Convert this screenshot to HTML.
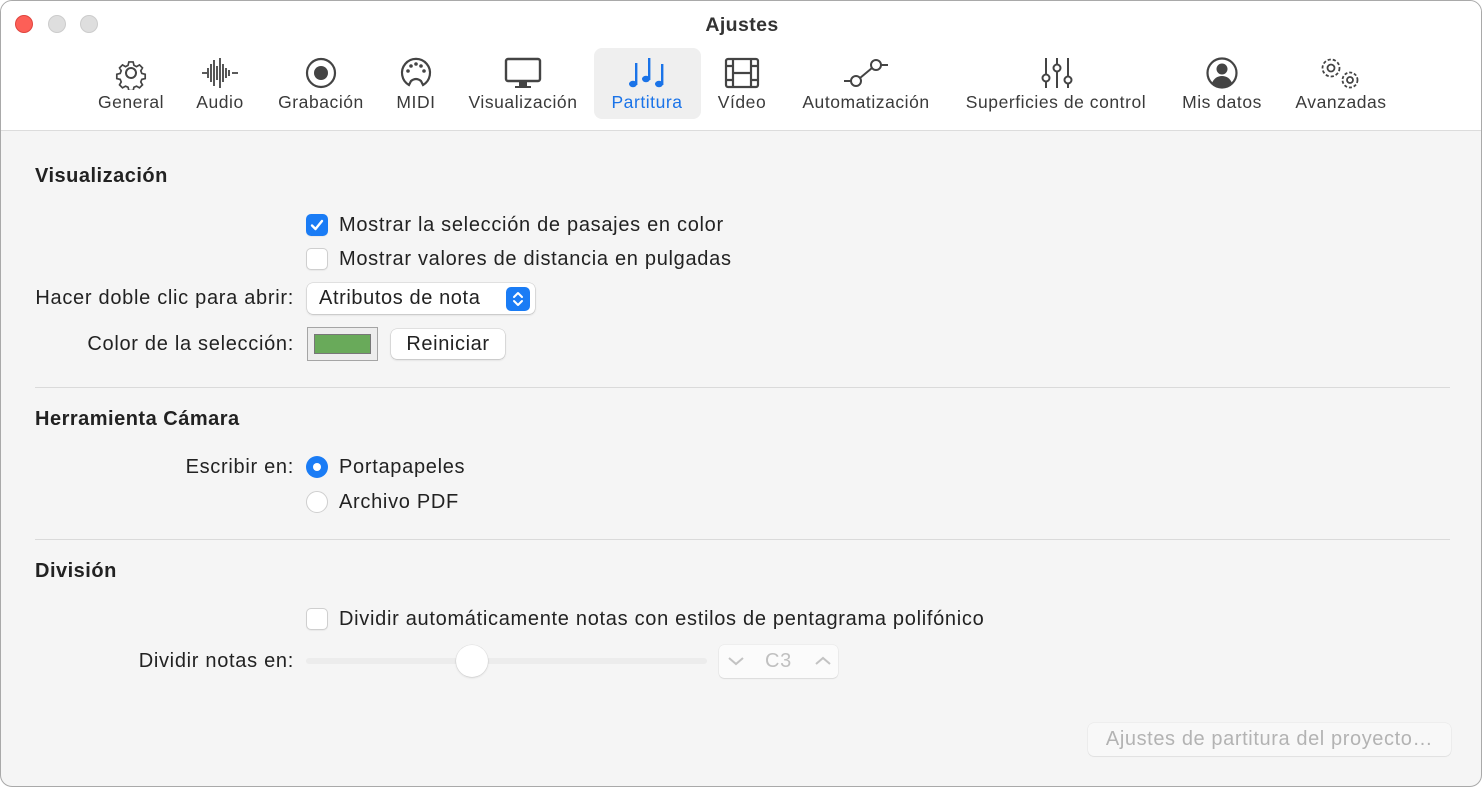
<!DOCTYPE html>
<html><head><meta charset="utf-8"><style>
*{margin:0;padding:0;box-sizing:border-box}
body{width:1482px;height:787px;background:#fff;font-family:"Liberation Sans",sans-serif;position:relative;overflow:hidden;color:#222}
.win{position:absolute;left:0;top:0;width:1482px;height:787px;border:1px solid #a9a9a9;border-radius:12px;background:#f5f5f5;overflow:hidden}
.hdr{position:absolute;left:0;top:0;width:100%;height:130px;background:#fff;border-bottom:1px solid #dcdcdc}
.a{position:absolute;white-space:nowrap}
.tb{position:absolute;width:240px;text-align:center;top:90px;font-size:17.5px;letter-spacing:.55px;color:#3a3a3a;line-height:22px}
.ic{position:absolute;top:55px}
.t{position:absolute;white-space:nowrap;font-size:20px;letter-spacing:.7px;line-height:24px;color:#222}
.h{font-weight:bold;letter-spacing:.5px}
.r{text-align:right}
.cb{position:absolute;width:22px;height:22px;border-radius:5px;background:#fff;border:1px solid #cfcfcf;box-shadow:0 1px 1px rgba(0,0,0,.05)}
.sep{position:absolute;left:34px;width:1415px;height:1px;background:#dadada}
.btn{position:absolute;background:#fff;border-radius:6px;box-shadow:0 0 0 .5px rgba(0,0,0,.15),0 1px 2px rgba(0,0,0,.15);font-size:20px;letter-spacing:.6px;line-height:30px;text-align:center}
</style></head><body>
<div class="win">
<div class="hdr"></div>
<div class="a" style="left:14px;top:14px;width:18px;height:18px;border-radius:50%;background:#fd5f57;border:.5px solid #e0443e"></div>
<div class="a" style="left:47px;top:14px;width:18px;height:18px;border-radius:50%;background:#dedede;border:.5px solid #ccc"></div>
<div class="a" style="left:79px;top:14px;width:18px;height:18px;border-radius:50%;background:#dedede;border:.5px solid #ccc"></div>
<div class="a" style="left:0;width:1482px;text-align:center;top:12px;font-size:19.5px;letter-spacing:.4px;font-weight:bold;color:#333;line-height:24px">Ajustes</div>
<div class="a" style="left:593px;top:47px;width:107px;height:71px;background:#efefef;border-radius:8px"></div>

<svg class="ic" style="left:113px" width="34" height="34" viewBox="0 0 34 34" fill="none" stroke="#444" stroke-width="2"><circle cx="17" cy="17" r="5"/><path d="M14.5 4h5l1 4 3 1.5 3.5-2 3.5 3.5-2 3.5 1.2 3 4 1v5l-4 1-1.2 3 2 3.5-3.5 3.5-3.5-2-3 1.2-1 4h-5l-1-4-3-1.2-3.5 2-3.5-3.5 2-3.5-1.2-3-4-1v-5l4-1 1.2-3-2-3.5 3.5-3.5 3.5 2 3-1.5z" transform="translate(17 17) scale(.85) translate(-17 -17)"/></svg>
<svg class="ic" style="left:200px" width="38" height="34" viewBox="0 0 38 34" fill="none" stroke="#444" stroke-width="1.8"><path d="M1 17h5M7 12v10M10 8v18M13 4v26M16 10v14M19 2v30M22 8v18M25 12v10M28 14v6M31 17h6"/></svg>
<svg class="ic" style="left:303px" width="34" height="34" viewBox="0 0 34 34"><circle cx="17" cy="17" r="14" fill="none" stroke="#444" stroke-width="2.2"/><circle cx="17" cy="17" r="7" fill="#444"/></svg>
<svg class="ic" style="left:398px" width="34" height="34" viewBox="0 0 34 34" fill="none" stroke="#444" stroke-width="2.2"><path d="M10 29A14 14 0 1 1 24 29L22 25Q17 21 12 25Z"/><g fill="#444" stroke="none"><circle cx="9" cy="15" r="1.8"/><circle cx="12" cy="10" r="1.8"/><circle cx="17" cy="8" r="1.8"/><circle cx="22" cy="10" r="1.8"/><circle cx="25" cy="15" r="1.8"/></g></svg>
<svg class="ic" style="left:503px" width="38" height="34" viewBox="0 0 38 34"><rect x="2" y="3" width="34" height="22" rx="2" fill="none" stroke="#444" stroke-width="2.4"/><rect x="15" y="26" width="8" height="4" fill="#444"/><rect x="11" y="30" width="16" height="2" fill="#444"/></svg>
<svg class="ic" style="left:627px" width="40" height="34" viewBox="0 0 40 34" fill="#1a73e8"><rect x="7" y="7" width="2.4" height="22"/><ellipse cx="5" cy="28" rx="4" ry="3.2"/><rect x="20" y="2" width="2.4" height="22"/><ellipse cx="18" cy="23" rx="4" ry="3.2"/><rect x="33" y="8" width="2.4" height="21"/><ellipse cx="31" cy="28" rx="4" ry="3.2"/></svg>
<svg class="ic" style="left:723px" width="36" height="34" viewBox="0 0 36 34" fill="none" stroke="#444" stroke-width="2.2"><rect x="2" y="3" width="32" height="28" rx="2"/><path d="M9 3v28M27 3v28M9 17h18M2 10h7M2 24h7M27 10h7M27 24h7"/></svg>
<svg class="ic" style="left:841px" width="48" height="34" viewBox="0 0 48 34" fill="none" stroke="#444" stroke-width="2"><circle cx="34" cy="9" r="5"/><circle cx="14" cy="25" r="5"/><path d="M39 9h7M2 25h7M30 12L18 22"/></svg>
<svg class="ic" style="left:1039px" width="34" height="34" viewBox="0 0 34 34" fill="none" stroke="#444" stroke-width="2"><path d="M6 2v16M6 26v6M17 2v6M17 16v16M28 2v18M28 28v4"/><circle cx="6" cy="22" r="3.5"/><circle cx="17" cy="12" r="3.5"/><circle cx="28" cy="24" r="3.5"/></svg>
<svg class="ic" style="left:1204px" width="34" height="34" viewBox="0 0 34 34"><circle cx="17" cy="17" r="14.5" fill="none" stroke="#444" stroke-width="2.2"/><circle cx="17" cy="13" r="5.5" fill="#444"/><path d="M7 27Q10 20 17 20Q24 20 27 27Q22 31 17 31Q12 31 7 27Z" fill="#444"/></svg>
<svg class="ic" style="left:1318px" width="46" height="36" viewBox="0 0 46 36" fill="none" stroke="#444" stroke-width="1.8"><circle cx="12" cy="12" r="3.5"/><circle cx="12" cy="12" r="8.5" stroke-dasharray="3.2 2"/><circle cx="31" cy="24" r="3"/><circle cx="31" cy="24" r="7.5" stroke-dasharray="3 1.9"/></svg>

<div class="tb" style="left:10px">General</div>
<div class="tb" style="left:99px">Audio</div>
<div class="tb" style="left:200px">Grabación</div>
<div class="tb" style="left:295px">MIDI</div>
<div class="tb" style="left:402px">Visualización</div>
<div class="tb" style="left:526px;color:#1a73e8">Partitura</div>
<div class="tb" style="left:621px">Vídeo</div>
<div class="tb" style="left:745px">Automatización</div>
<div class="tb" style="left:935px">Superficies de control</div>
<div class="tb" style="left:1101px">Mis datos</div>
<div class="tb" style="left:1220px">Avanzadas</div>

<div class="t h" style="left:34px;top:163px">Visualización</div>
<div class="cb" style="left:305px;top:213px;background:#1a7cf5;border-color:#1a7cf5"><svg width="20" height="20" viewBox="0 0 20 20" style="position:absolute;left:0;top:0"><path d="M5 10.5l3.5 3.5 6.5-8" fill="none" stroke="#fff" stroke-width="2.4" stroke-linecap="round" stroke-linejoin="round"/></svg></div>
<div class="t" style="left:338px;top:212px">Mostrar la selección de pasajes en color</div>
<div class="cb" style="left:305px;top:247px"></div>
<div class="t" style="left:338px;top:246px">Mostrar valores de distancia en pulgadas</div>
<div class="t r" style="right:1187px;top:285px">Hacer doble clic para abrir:</div>
<div class="btn" style="left:306px;top:282px;width:228px;height:31px;text-align:left;padding-left:12px;line-height:31px">Atributos de nota</div>
<div class="a" style="left:505px;top:286px;width:24px;height:24px;background:#1a7cf5;border-radius:5px"><svg width="24" height="24" viewBox="0 0 24 24"><path d="M8 10l4-4 4 4M8 14l4 4 4-4" fill="none" stroke="#fff" stroke-width="2" stroke-linecap="round" stroke-linejoin="round"/></svg></div>
<div class="t r" style="right:1187px;top:331px">Color de la selección:</div>
<div class="a" style="left:306px;top:326px;width:71px;height:34px;background:#ededed;border:1px solid #a5a5a5"></div>
<div class="a" style="left:313px;top:333px;width:57px;height:20px;background:#69aa5a;border:1px solid #777"></div>
<div class="btn" style="left:390px;top:328px;width:114px;height:30px">Reiniciar</div>
<div class="sep" style="top:386px"></div>

<div class="t h" style="left:34px;top:406px">Herramienta Cámara</div>
<div class="t r" style="right:1187px;top:454px">Escribir en:</div>
<div class="a" style="left:305px;top:455px;width:22px;height:22px;border-radius:50%;background:#1a7cf5"><div class="a" style="left:7px;top:7px;width:8px;height:8px;border-radius:50%;background:#fff"></div></div>
<div class="t" style="left:338px;top:454px">Portapapeles</div>
<div class="a" style="left:305px;top:490px;width:22px;height:22px;border-radius:50%;background:#fff;border:1px solid #cfcfcf"></div>
<div class="t" style="left:338px;top:489px">Archivo PDF</div>
<div class="sep" style="top:538px"></div>

<div class="t h" style="left:34px;top:558px">División</div>
<div class="cb" style="left:305px;top:607px"></div>
<div class="t" style="left:338px;top:606px">Dividir automáticamente notas con estilos de pentagrama polifónico</div>
<div class="t r" style="right:1187px;top:648px">Dividir notas en:</div>
<div class="a" style="left:305px;top:657px;width:401px;height:6px;border-radius:3px;background:#ececec"></div>
<div class="a" style="left:455px;top:644px;width:32px;height:32px;border-radius:50%;background:#fff;box-shadow:0 0 0 .5px rgba(0,0,0,.08),0 1px 2px rgba(0,0,0,.12)"></div>
<div class="a" style="left:718px;top:644px;width:119px;height:33px;background:#fbfbfb;border-radius:5px;box-shadow:0 0 0 .5px rgba(0,0,0,.06),0 1px 1px rgba(0,0,0,.08)"></div>
<svg class="a" style="left:726px;top:654px" width="18" height="12" viewBox="0 0 18 12"><path d="M2 3l7 6 7-6" fill="none" stroke="#c3c3c3" stroke-width="2"/></svg>
<div class="t" style="left:764px;top:648px;color:#c0c0c0">C3</div>
<svg class="a" style="left:813px;top:654px" width="18" height="12" viewBox="0 0 18 12"><path d="M2 9l7-6 7 6" fill="none" stroke="#c3c3c3" stroke-width="2"/></svg>

<div class="a" style="left:1087px;top:722px;width:363px;height:33px;background:#f8f8f8;border-radius:6px;box-shadow:0 0 0 .5px rgba(0,0,0,.06),0 1px 1px rgba(0,0,0,.06);font-size:20px;letter-spacing:.6px;line-height:33px;text-align:center;color:#b3b3b3">Ajustes de partitura del proyecto…</div>
</div>
</body></html>
